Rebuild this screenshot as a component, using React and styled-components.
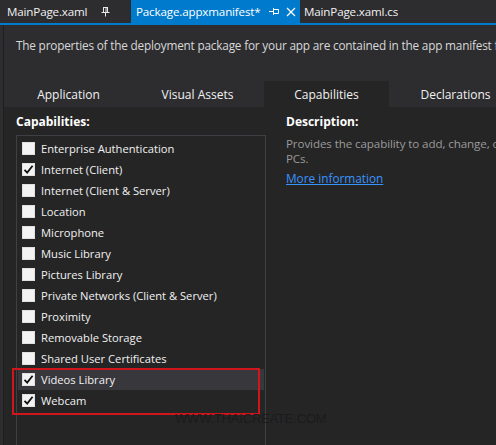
import React from 'react'
import styled, { createGlobalStyle } from 'styled-components'

const GlobalStyle = createGlobalStyle`
  html, body {
    margin: 0;
    padding: 0;
    background: #252526;
  }
  * { box-sizing: border-box; }
`

const Window = styled.div`
  position: relative;
  width: 496px;
  height: 445px;
  overflow: hidden;
  background: #2d2d30;
  font-family: "Open Sans", "Noto Sans", sans-serif;
  font-size: 11.5px;
  color: #f1f1f1;
  display: flex;
  flex-direction: column;
`

const DocTabs = styled.div`
  display: flex;
  align-items: stretch;
  height: 25px;
  padding-left: 3px;
  border-bottom: 2px solid #007acc;
  white-space: nowrap;
`

const DocTab = styled.div`
  display: flex;
  align-items: center;
  flex: 0 0 ${p => p.$width || 'auto'};
  padding-left: ${p => (p.$active ? '5px' : '4px')};
  background: ${p => (p.$active ? '#007acc' : 'transparent')};
  color: ${p => (p.$active ? '#ffffff' : '#f1f1f1')};
  font-size: 11.6px;
  letter-spacing: -0.15px;
`

const TabName = styled.span`
  margin-right: ${p => p.$gap || 0}px;
`

const TabIcon = styled.span`
  display: flex;
  align-items: center;
  margin-right: ${p => p.$gap || 0}px;
`

const Editor = styled.div`
  flex: 1;
  display: flex;
  flex-direction: column;
  margin-left: 3px;
  border-left: 1px solid #1f1f20;
  min-height: 0;
`

const Header = styled.div`
  background: #2d2d30;
  padding-top: 12px;
`

const Intro = styled.div`
  padding-left: 12px;
  color: #d8d8d8;
  font-size: 11.8px;
  white-space: nowrap;
  letter-spacing: -0.2px;
  height: 18px;
`

const PageTabs = styled.div`
  display: flex;
  gap: 4px;
  margin-top: 26px;
  padding-left: 2px;
`

const PageTab = styled.div`
  flex: 0 0 125px;
  height: 26px;
  display: flex;
  align-items: center;
  justify-content: center;
  background: ${p => (p.$active ? '#252526' : 'transparent')};
  color: #f1f1f1;
  font-size: 12px;
`

const Body = styled.div`
  flex: 1;
  display: flex;
  gap: 20px;
  background: #252526;
  padding-left: 12px;
  min-height: 0;
`

const LeftCol = styled.div`
  flex: 0 0 250px;
  display: flex;
  flex-direction: column;
`

const RightCol = styled.div`
  flex: 1;
  min-width: 0;
  display: flex;
  flex-direction: column;
  white-space: nowrap;
  overflow: hidden;
`

const Heading = styled.div`
  font-weight: 700;
  font-size: 12px;
  color: #ffffff;
  margin-top: 6px;
  height: 19px;
`

const ListBox = styled.div`
  flex: 1;
  margin-top: 3px;
  border: 1px solid #3f3f46;
  border-bottom: none;
  padding: 2px 1px 0 1px;
`

const Row = styled.div`
  display: flex;
  align-items: center;
  height: 21px;
  padding-left: 4px;
  gap: 6px;
  font-size: 11.2px;
  background: ${p => (p.$selected ? '#38383c' : 'transparent')};
  white-space: nowrap;
`

const Box = styled.span`
  width: 13px;
  height: 13px;
  flex: 0 0 13px;
  background: #f3f3f3;
  border: 1px solid #e0e0e0;
  display: flex;
  align-items: center;
  justify-content: center;
`

const Marked = styled.div`
  position: relative;
  &::after {
    content: '';
    position: absolute;
    left: -6px;
    top: -1px;
    width: 244px;
    height: 43px;
    border: 2px solid #d0161c;
    pointer-events: none;
  }
`

const DescText = styled.div`
  color: #9a9a9a;
  font-size: 11.6px;
  letter-spacing: -0.1px;
  line-height: 15px;
  margin-top: 4px;
`

const Link = styled.a`
  align-self: flex-start;
  color: #3794ff;
  text-decoration: underline;
  font-size: 11.8px;
  margin-top: 4px;
  cursor: pointer;
`

const Watermark = styled.div`
  position: absolute;
  left: 175px;
  top: 411px;
  font-family: "Liberation Sans", Arial, sans-serif;
  font-size: 13px;
  letter-spacing: -0.2px;
  color: #1b1b1c;
  pointer-events: none;
`

const VPin = () => (
  <svg width="9" height="10" viewBox="0 0 9 10">
    <path d="M2 0.5h5M2.5 0.5v5M6.5 0.5v5M5 0.5v5M0.5 5.5h8M4.5 5.5v4" stroke="#e8e8e8" strokeWidth="1" fill="none" />
  </svg>
)

const HPin = () => (
  <svg width="10" height="9" viewBox="0 0 10 9">
    <path d="M0 4.5h4M4.5 1v7M4.5 2.5h5M4.5 6.5h5M9.5 2.5v4" stroke="#ffffff" strokeWidth="1" fill="none" />
  </svg>
)

const Close = () => (
  <svg width="10" height="10" viewBox="0 0 10 10">
    <path d="M1 1L9 9M9 1L1 9" stroke="#ffffff" strokeWidth="1.3" fill="none" />
  </svg>
)

const Check = () => (
  <svg width="11" height="11" viewBox="0 0 11 11">
    <path d="M1.5 5.8L4.2 8.6L9.6 1.8" stroke="#111" strokeWidth="1.8" fill="none" />
  </svg>
)

const capabilities = [
  { name: 'Enterprise Authentication' },
  { name: 'Internet (Client)', checked: true },
  { name: 'Internet (Client & Server)' },
  { name: 'Location' },
  { name: 'Microphone' },
  { name: 'Music Library' },
  { name: 'Pictures Library' },
  { name: 'Private Networks (Client & Server)' },
  { name: 'Proximity' },
  { name: 'Removable Storage' },
  { name: 'Shared User Certificates' },
]

const marked = [
  { name: 'Videos Library', checked: true, selected: true },
  { name: 'Webcam', checked: true },
]

const CapRow = ({ item }) => (
  <Row $selected={item.selected}>
    <Box>{item.checked && <Check />}</Box>
    <span>{item.name}</span>
  </Row>
)

export default function App() {
  return (
    <Window>
      <GlobalStyle />
      <DocTabs>
        <DocTab $width="128px">
          <TabName $gap={14}>MainPage.xaml</TabName>
          <TabIcon><VPin /></TabIcon>
        </DocTab>
        <DocTab $active $width="169px">
          <TabName $gap={8}>Package.appxmanifest*</TabName>
          <TabIcon $gap={7}><HPin /></TabIcon>
          <TabIcon><Close /></TabIcon>
        </DocTab>
        <DocTab>
          <TabName>MainPage.xaml.cs</TabName>
        </DocTab>
      </DocTabs>
      <Editor>
        <Header>
          <Intro>The properties of the deployment package for your app are contained in the app manifest file.</Intro>
          <PageTabs>
            <PageTab>Application</PageTab>
            <PageTab>Visual Assets</PageTab>
            <PageTab $active>Capabilities</PageTab>
            <PageTab>Declarations</PageTab>
          </PageTabs>
        </Header>
        <Body>
          <LeftCol>
            <Heading>Capabilities:</Heading>
            <ListBox>
              {capabilities.map(c => <CapRow key={c.name} item={c} />)}
              <Marked>
                {marked.map(c => <CapRow key={c.name} item={c} />)}
              </Marked>
            </ListBox>
          </LeftCol>
          <RightCol>
            <Heading>Description:</Heading>
            <DescText>
              Provides the capability to add, change, or delete files in the Videos Library for the local PCs and HomeGroup
              <br />
              PCs.
            </DescText>
            <Link>More information</Link>
          </RightCol>
        </Body>
      </Editor>
      <Watermark>WWW.THAICREATE.COM</Watermark>
    </Window>
  )
}
